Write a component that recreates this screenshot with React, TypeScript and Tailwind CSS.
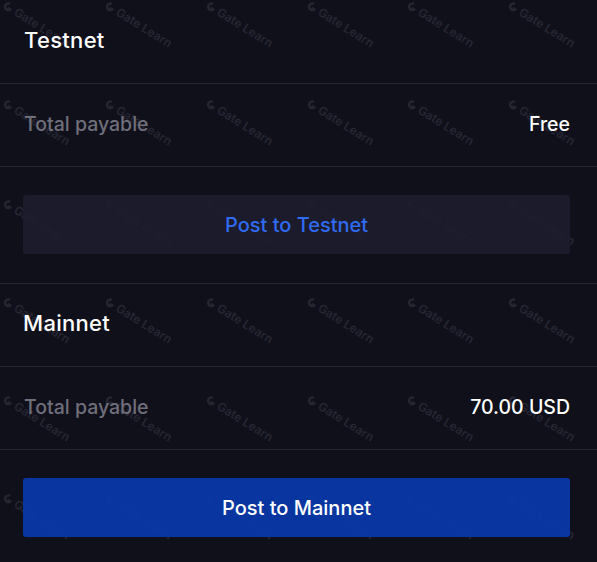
import React from 'react';

const COLS = [8, 110, 211, 312, 412, 513];
const ROWS = [-4, 94, 194, 292, 390, 488];

function Watermark({ x, y }: { x: number; y: number }) {
  return (
    <div
      className="absolute flex items-center gap-[2px] text-[12px] font-semibold text-[#262632] origin-top-left rotate-[32deg] whitespace-nowrap"
      style={{ left: x, top: y }}
    >
      <svg width="12" height="12" viewBox="0 0 12 12" className="shrink-0">
        <path d="M10.5 6A4.5 4.5 0 1 1 6 1.5V4A2 2 0 1 0 8 6Z" fill="#262632" />
        <rect x="6" y="6" width="2" height="2" fill="#262632" />
      </svg>
      <span>Gate Learn</span>
    </div>
  );
}

function PayRow({ value }: { value: string }) {
  return (
    <div className="h-[83px] border-b border-[#262633] flex items-center justify-between pl-6 pr-[27px]">
      <span className="text-[19.5px] text-[#6f6f7a] font-medium">Total payable</span>
      <span className="text-[19.5px] text-white font-medium">{value}</span>
    </div>
  );
}

export default function App() {
  return (
    <div
      className="relative w-[597px] h-[562px] overflow-hidden bg-[#10101b]"
      style={{ fontFamily: 'Inter, "Liberation Sans", sans-serif' }}
    >
      <div className="pointer-events-none absolute inset-0">
        {ROWS.map((y) =>
          COLS.map((x) => <Watermark key={`${x}-${y}`} x={x} y={y} />)
        )}
      </div>

      <div className="relative">
        <div className="h-[84px] border-b border-[#262633] flex items-center pl-6 pb-[3px]">
          <span className="text-[22px] tracking-[0.3px] text-white font-medium">Testnet</span>
        </div>
        <PayRow value="Free" />
        <div className="h-[117px] border-b border-[#262633] pt-[28px] pl-[23px] pr-[27px]">
          <button className="w-full h-[59px] rounded-[3px] bg-[#1e1d2d]/90 text-[20px] text-[#2f6bf2] font-medium">
            Post to Testnet
          </button>
        </div>
        <div className="h-[83px] border-b border-[#262633] flex items-center pl-[23px] pb-[4px]">
          <span className="text-[22px] tracking-[0.3px] text-white font-medium">Mainnet</span>
        </div>
        <PayRow value="70.00 USD" />
        <div className="pt-[28px] pl-[23px] pr-[27px]">
          <button className="w-full h-[59px] rounded-[3px] bg-[#0838a6]/95 text-[20px] text-white font-medium">
            Post to Mainnet
          </button>
        </div>
      </div>
    </div>
  );
}
